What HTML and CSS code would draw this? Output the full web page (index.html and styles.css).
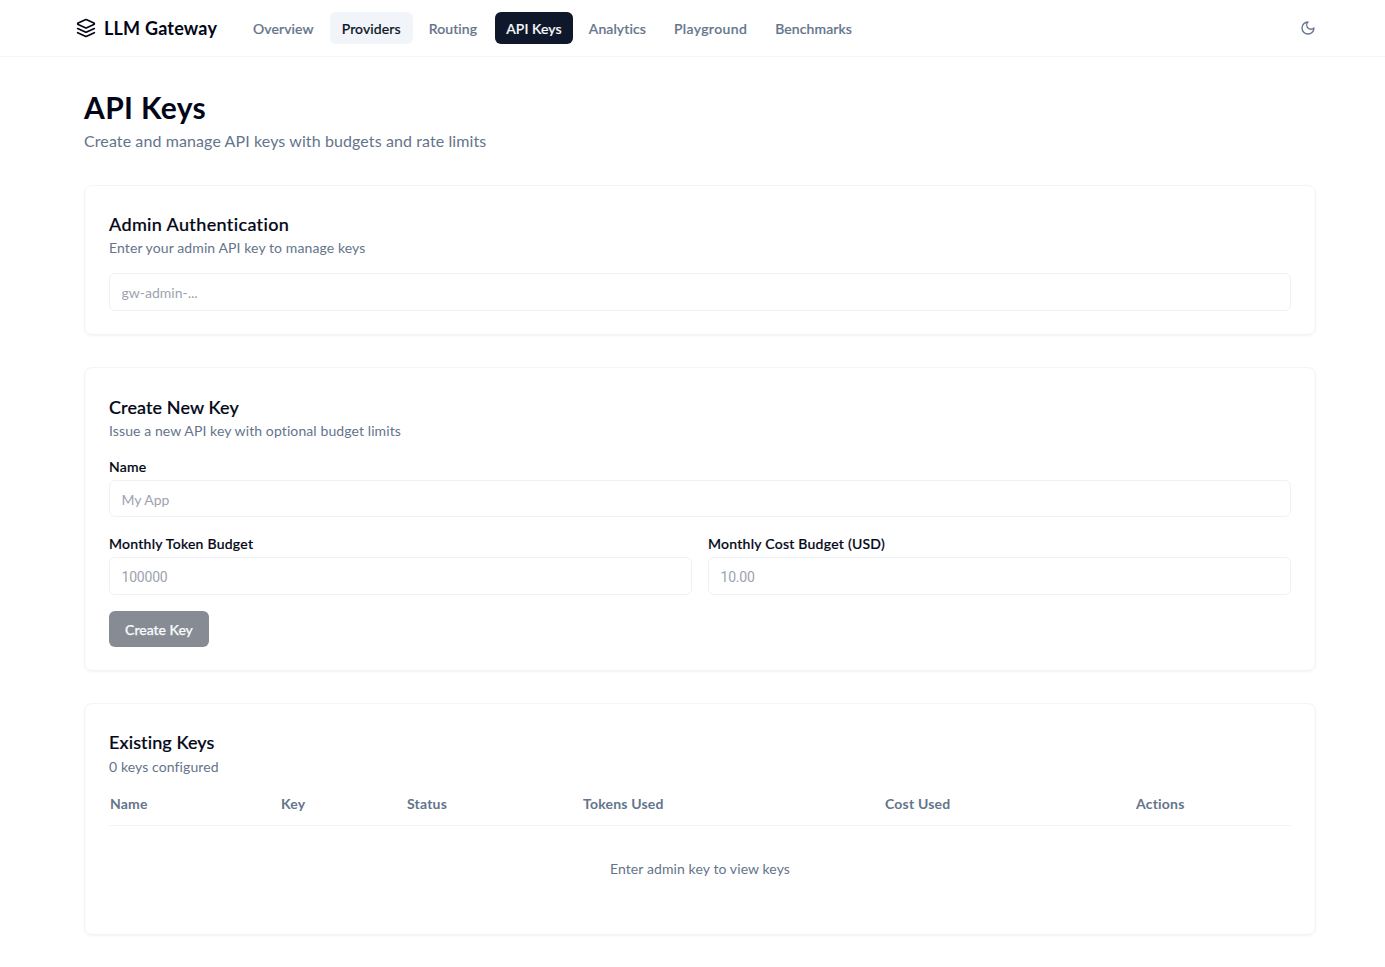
FILE: index.html
```html
<!DOCTYPE html>
<html lang="en">
<head>
<meta charset="utf-8">
<title>API Keys - LLM Gateway</title>
<link rel="stylesheet" href="styles.css">
</head>
<body>
<header class="topbar">
  <div class="brand">
    <svg class="brand-icon" viewBox="0 0 24 24" fill="none" stroke="currentColor" stroke-width="2" stroke-linecap="round" stroke-linejoin="round"><path d="M12.83 2.18a2 2 0 0 0-1.66 0L2.6 6.08a1 1 0 0 0 0 1.83l8.58 3.91a2 2 0 0 0 1.66 0l8.58-3.9a1 1 0 0 0 0-1.83Z"/><path d="m22 17.65-9.17 4.16a2 2 0 0 1-1.66 0L2 17.65"/><path d="m22 12.65-9.17 4.16a2 2 0 0 1-1.66 0L2 12.65"/></svg>
    <span>LLM Gateway</span>
  </div>
  <nav class="nav">
    <a class="nav-link">Overview</a>
    <a class="nav-link nav-hover">Providers</a>
    <a class="nav-link">Routing</a>
    <a class="nav-link nav-active">API Keys</a>
    <a class="nav-link">Analytics</a>
    <a class="nav-link nav-wide">Playground</a>
    <a class="nav-link">Benchmarks</a>
  </nav>
  <svg class="moon" viewBox="0 0 24 24" fill="none" stroke="currentColor" stroke-width="2" stroke-linecap="round" stroke-linejoin="round"><path d="M12 3a6 6 0 0 0 9 9 9 9 0 1 1-9-9Z"/></svg>
</header>
<main class="main">
  <h1 class="title">API Keys</h1>
  <p class="subtitle">Create and manage API keys with budgets and rate limits</p>

  <section class="card">
    <h2 class="card-title card-title-wide">Admin Authentication</h2>
    <p class="card-desc">Enter your admin API key to manage keys</p>
    <input class="input input-auth" placeholder="gw-admin-...">
  </section>

  <section class="card card-offset">
    <h2 class="card-title">Create New Key</h2>
    <p class="card-desc">Issue a new API key with optional budget limits</p>
    <div class="field field-name">
      <label class="label">Name</label>
      <input class="input input-short" placeholder="My App">
    </div>
    <div class="field-row">
      <div class="field">
        <label class="label">Monthly Token Budget</label>
        <input class="input input-number" placeholder="100000">
      </div>
      <div class="field">
        <label class="label">Monthly Cost Budget (USD)</label>
        <input class="input input-number" placeholder="10.00">
      </div>
    </div>
    <button class="button" disabled>Create Key</button>
  </section>

  <section class="card card-last">
    <h2 class="card-title">Existing Keys</h2>
    <p class="card-desc">0 keys configured</p>
    <table class="table">
      <thead>
        <tr>
          <th class="col-name">Name</th>
          <th class="col-key">Key</th>
          <th class="col-status">Status</th>
          <th class="col-tokens">Tokens Used</th>
          <th class="col-cost">Cost Used</th>
          <th>Actions</th>
        </tr>
      </thead>
      <tbody>
        <tr><td class="empty" colspan="6">Enter admin key to view keys</td></tr>
      </tbody>
    </table>
  </section>
</main>
</body>
</html>
```

FILE: styles.css
```css
* { box-sizing: border-box; }
html, body { margin: 0; padding: 0; background: #fff; }
body {
  font-family: Lato, "Noto Sans", sans-serif;
  color: #0f172a;
  font-size: 14px;
  letter-spacing: 0.1px;
}
.topbar {
  height: 57px;
  border-bottom: 1px solid #f1f5f9;
  display: flex;
  align-items: center;
  padding: 0 69px 0 76px;
}
.brand {
  display: flex;
  align-items: center;
  gap: 8px;
  font-size: 18px;
  font-weight: 700;
  width: 165px;
  white-space: nowrap;
  color: #020617;
  letter-spacing: 0.2px;
}
.brand-icon { width: 20px; height: 20px; flex: none; }
.nav { display: flex; gap: 4px; flex: 1; }
.nav-link {
  padding: 0 12px;
  height: 32px;
  line-height: 33px;
  font-size: 14px;
  font-weight: 500;
  color: #64748b;
  border-radius: 6px;
  white-space: nowrap;
  -webkit-text-stroke: 0.2px currentColor;
}
.nav-wide { letter-spacing: 0.4px; }
.nav-hover { background: #f1f5f9; color: #0f172a; }
.nav-active { background: #0f172a; color: #f8fafc; padding: 0 11px; margin-left: 2px; }
.moon { width: 16px; height: 16px; color: #64748b; }
.main { width: 1232px; margin-left: 84px; padding-top: 30px; padding-bottom: 32px; }
.title { margin: 0 0 2px; font-size: 30px; line-height: 40px; font-weight: 700; color: #020617; letter-spacing: 0.35px; }
.subtitle { margin: 0 0 32px; font-size: 16px; line-height: 24px; color: #64748b; }
.card {
  border: 1px solid #f1f5f9;
  border-radius: 8px;
  box-shadow: 0 1px 2px rgba(0,0,0,.05);
  padding: 24px 24px 23px;
  margin-bottom: 32px;
}
.card-offset { padding-top: 25px; }
.card-title { margin: 0; font-size: 18px; line-height: 28px; font-weight: 500; color: #020617; -webkit-text-stroke: 0.2px currentColor; }
.card-title-wide { letter-spacing: 0.35px; }
.card-desc { margin: 0; font-size: 14px; line-height: 20px; color: #64748b; }
.card-last .card-desc { margin-top: 1px; }
.input {
  display: block;
  width: 100%;
  height: 38px;
  border: 1px solid #eef1f6;
  border-radius: 6px;
  padding: 0 11.5px;
  font: inherit;
  font-size: 14px;
  background: #fff;
  outline: none;
}
.input-short { height: 37px; padding-top: 2px; }
.input-number { font-family: Roboto, sans-serif; letter-spacing: -0.2px; padding-top: 2px; }
.input::placeholder { color: #9ca3af; opacity: 1; }
.input-auth { margin-top: 15px; }
.field-name { margin-top: 19px; }
.label { display: block; font-size: 14px; line-height: 14px; font-weight: 500; margin-bottom: 6px; color: #020617; letter-spacing: 0.25px; -webkit-text-stroke: 0.2px currentColor; }
.field-row { display: grid; grid-template-columns: 1fr 1fr; gap: 16px; margin-top: 20px; }
.button {
  display: block;
  margin-top: 16px;
  width: 100px;
  height: 36px;
  border: 0;
  border-radius: 6px;
  background: #878b94;
  color: #f8fafc;
  font: inherit;
  font-size: 14px;
  font-weight: 500;
  -webkit-text-stroke: 0.25px currentColor;
}
.table { width: 100%; border-collapse: collapse; margin-top: 5px; table-layout: fixed; }
.table th {
  text-align: left;
  height: 43px;
  padding: 0 1px;
  font-size: 14px;
  font-weight: 700;
  color: #64748b;
  border-bottom: 1px solid #f1f5f9;
  letter-spacing: 0.2px;
}
.col-name { width: 171px; }
.col-key { width: 126px; }
.col-status { width: 176px; }
.col-tokens { width: 302px; }
.col-cost { width: 251px; }
.empty { text-align: center; height: 86px; color: #64748b; font-size: 14px; }
```
